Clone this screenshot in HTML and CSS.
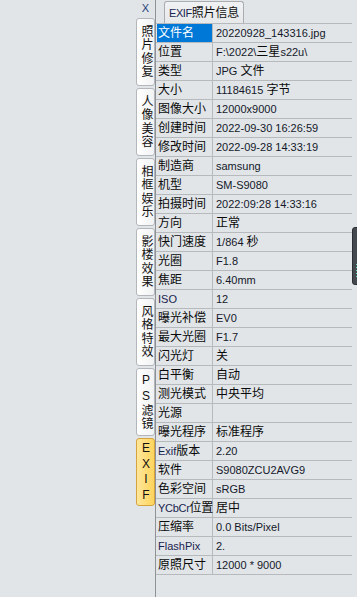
FILE: index.html
```html
<!DOCTYPE html>
<html lang="zh-CN">
<head>
    <meta charset="UTF-8">
    <title>EXIF照片信息</title>
    <link rel="stylesheet" href="styles.css">
</head>
<body>
<div class="app">
    <div class="blank"></div>

    <!-- vertical tab strip -->
    <div class="strip">
        <div class="close">X</div>
        <div class="vtab"><span>照片修复</span></div>
        <div class="vtab"><span>人像美容</span></div>
        <div class="vtab"><span>相框娱乐</span></div>
        <div class="vtab"><span>影楼效果</span></div>
        <div class="vtab"><span>风格特效</span></div>
        <div class="vtab"><span>PS滤镜</span></div>
        <div class="vtab active"><span>EXIF</span></div>
    </div>

    <!-- exif panel -->
    <div class="panel">
        <div class="panel-head">
            <div class="head-tab"><span class="en">EXIF</span>照片信息</div>
        </div>
        <div class="rows">
            <div class="row"><div class="k sel">文件名</div><div class="v">20220928_143316.jpg</div></div>
            <div class="row"><div class="k">位置</div><div class="v">F:\2022\<span class="cn">三星</span>s22u\</div></div>
            <div class="row"><div class="k">类型</div><div class="v">JPG <span class="cn">文件</span></div></div>
            <div class="row"><div class="k">大小</div><div class="v">11184615 <span class="cn">字节</span></div></div>
            <div class="row"><div class="k">图像大小</div><div class="v">12000x9000</div></div>
            <div class="row"><div class="k">创建时间</div><div class="v">2022-09-30 16:26:59</div></div>
            <div class="row"><div class="k">修改时间</div><div class="v">2022-09-28 14:33:19</div></div>
            <div class="row"><div class="k">制造商</div><div class="v">samsung</div></div>
            <div class="row"><div class="k">机型</div><div class="v">SM-S9080</div></div>
            <div class="row"><div class="k">拍摄时间</div><div class="v">2022:09:28 14:33:16</div></div>
            <div class="row"><div class="k">方向</div><div class="v cn">正常</div></div>
            <div class="row"><div class="k">快门速度</div><div class="v">1/864 <span class="cn">秒</span></div></div>
            <div class="row"><div class="k">光圈</div><div class="v">F1.8</div></div>
            <div class="row"><div class="k">焦距</div><div class="v">6.40mm</div></div>
            <div class="row"><div class="k en">ISO</div><div class="v">12</div></div>
            <div class="row"><div class="k">曝光补偿</div><div class="v">EV0</div></div>
            <div class="row"><div class="k">最大光圈</div><div class="v">F1.7</div></div>
            <div class="row"><div class="k">闪光灯</div><div class="v cn">关</div></div>
            <div class="row"><div class="k">白平衡</div><div class="v cn">自动</div></div>
            <div class="row"><div class="k">测光模式</div><div class="v cn">中央平均</div></div>
            <div class="row"><div class="k">光源</div><div class="v"></div></div>
            <div class="row"><div class="k">曝光程序</div><div class="v cn">标准程序</div></div>
            <div class="row"><div class="k"><span class="en">Exif</span>版本</div><div class="v">2.20</div></div>
            <div class="row"><div class="k">软件</div><div class="v">S9080ZCU2AVG9</div></div>
            <div class="row"><div class="k">色彩空间</div><div class="v">sRGB</div></div>
            <div class="row"><div class="k wide"><span class="en">YCbCr</span>位置</div><div class="v cn">居中</div></div>
            <div class="row"><div class="k">压缩率</div><div class="v">0.0 Bits/Pixel</div></div>
            <div class="row"><div class="k en">FlashPix</div><div class="v">2.</div></div>
            <div class="row"><div class="k">原照尺寸</div><div class="v">12000 * 9000</div></div>
        </div>
    </div>

    <!-- floating widget peeking in from the right edge -->
    <div class="float-bar"></div>
</div>
</body>
</html>
```

FILE: styles.css
```css
html, body {
    margin: 0;
    padding: 0;
}
body {
    background: #e1e5e8;
    font-family: "Liberation Sans", "Noto Sans CJK SC", sans-serif;
    color: #111;
}
.app {
    position: relative;
    display: flex;
    height: 597px;
    overflow: hidden;
}
.blank {
    flex: 0 0 136px;
}

/* tab strip */
.strip {
    flex: 0 0 19px;
    display: flex;
    flex-direction: column;
}
.close {
    height: 18px;
    line-height: 16px;
    font-size: 11px;
    text-align: center;
    color: #1f3f7a;
}
.vtab {
    box-sizing: border-box;
    height: 68px;
    margin-bottom: 2px;
    border: 1px solid #b3b7bb;
    border-radius: 3px;
    background: linear-gradient(to right, #ffffff, #f1f2f3);
    display: flex;
    flex-direction: column;
    align-items: center;
    justify-content: center;
}
.vtab span {
    writing-mode: vertical-rl;
    text-orientation: upright;
    font-size: 12px;
    letter-spacing: 1.5px;
    line-height: 17px;
    color: #111;
}
.vtab.active {
    border-color: #d5a43e;
    background: linear-gradient(to right, #ffe69a, #ffd45c);
}

/* panel */
.panel {
    flex: 1;
    border-left: 1px solid #8e9296;
}
.panel-head {
    height: 23px;
    padding-left: 8px;
    box-sizing: border-box;
    padding-top: 1px;
}
.head-tab {
    display: inline-block;
    box-sizing: border-box;
    width: 80px;
    height: 22px;
    line-height: 22px;
    border: 1px solid #a9adb1;
    border-bottom: none;
    border-radius: 3px 3px 0 0;
    background: linear-gradient(#f1f2f3, #e6e8ea);
    font-size: 12px;
    text-align: center;
    letter-spacing: -0.2px;
}
.head-tab .en {
    font-size: 11px;
    letter-spacing: -0.4px;
}
.rows {
    width: 196px;
    border-top: 1px solid #b7babd;
}
.row {
    display: grid;
    grid-template-columns: 57px 1fr;
    height: 18px;
    border-bottom: 1px solid #b7babd;
    line-height: 18px;
    white-space: nowrap;
}
.k {
    border-right: 1px solid #b7babd;
    padding-left: 2px;
    font-size: 12px;
    color: #0a0a0a;
}
.k.sel {
    background: #0078d7;
    color: #fff;
    margin-left: 1px;
    padding-left: 1px;
}
.k.wide {
    overflow: visible;
    letter-spacing: -0.3px;
}
.v {
    padding-left: 3px;
    font-size: 11px;
    color: #14182a;
}
.en {
    font-size: 11px;
    color: #18244e;
}
.k.en {
    font-size: 11px;
}
.cn, .v .cn {
    font-size: 12px;
    color: #0a0a0a;
}

/* floating widget at right edge */
.float-bar {
    position: absolute;
    left: 352px;
    top: 227px;
    width: 10px;
    height: 58px;
    box-sizing: border-box;
    border: 1px solid #2b2f34;
    border-radius: 3px;
    background: #444950;
}
.float-bar::after {
    content: "";
    position: absolute;
    left: 3px;
    top: 36px;
    width: 1px;
    height: 15px;
    background: repeating-linear-gradient(#5fd8b0 0 1px, transparent 1px 3px);
}
```
